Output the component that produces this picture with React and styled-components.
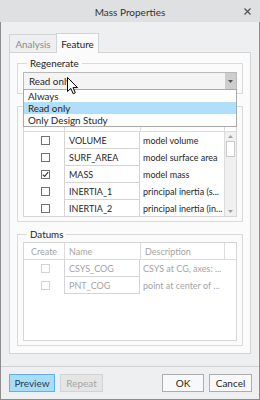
import React from 'react';
import styled, { createGlobalStyle } from 'styled-components';

const GlobalStyle = createGlobalStyle`
  html, body { margin: 0; padding: 0; background: #fff; }
  body {
    font-family: Lato, "Noto Sans", sans-serif;
    font-size: 9.4px;
    color: #262626;
  }
  * { box-sizing: border-box; }
`;

const Window = styled.div`
  width: 260px;
  height: 400px;
  display: flex;
  flex-direction: column;
  background: #eeeff0;
`;

const TitleBar = styled.div`
  height: 22px;
  flex: none;
  display: grid;
  grid-template-columns: 1fr auto 1fr;
  align-items: center;
  background: #dfe0e1;
  font-size: 10px;
  color: #333;
`;

const Title = styled.div`
  grid-column: 2;
  padding-top: 1px;
`;

const CloseBtn = styled.div`
  grid-column: 3;
  justify-self: end;
  margin-right: 9px;
  display: flex;
`;

const Frame = styled.div`
  flex: 1;
  display: flex;
  flex-direction: column;
  border: 1px solid #8c8c8c;
  border-top: none;
`;

const Content = styled.div`
  padding: 11px 8px 12px;
`;

const Tabs = styled.div`
  display: flex;
  align-items: flex-end;
  height: 19px;
`;

const Tab = styled.div`
  height: ${p => (p.$active ? 20 : 18)}px;
  width: ${p => p.$w}px;
  display: flex;
  align-items: center;
  justify-content: center;
  border: 1px solid #d3d3d3;
  border-bottom: none;
  ${p => !p.$active && 'border-right: none;'}
  background: ${p => (p.$active ? '#fbfbfb' : '#eeeff0')};
  color: ${p => (p.$active ? '#222' : '#8a8a8a')};
  font-size: 9.8px;
  margin-bottom: ${p => (p.$active ? -1 : 0)}px;
  position: relative;
  z-index: ${p => (p.$active ? 1 : 0)};
`;

const Panel = styled.div`
  height: 302px;
  display: flex;
  flex-direction: column;
  background: #fbfbfb;
  border: 1px solid #d3d3d3;
  padding: 3px 7px 7px;
`;

const Group = styled.fieldset`
  margin: ${p => (p.$first ? 0 : 5)}px 0 0;
  padding: ${p => p.$pt}px 5px ${p => p.$pb}px;
  border: 1px solid #dadada;
  min-width: 0;
`;

const Legend = styled.legend`
  margin-left: 4px;
  padding: 0 3px;
  height: 14px;
  line-height: 14px;
  font-size: 9.8px;
  color: #222;
`;

const Dropdown = styled.div`
  position: relative;
  height: 18px;
  display: flex;
  align-items: stretch;
  border: 1px solid #b9b9b9;
  background: #f4f4f4;
  font-size: 9.8px;
`;

const DropText = styled.div`
  flex: 1;
  display: flex;
  align-items: center;
  padding-left: 5px;
`;

const DropButton = styled.div`
  width: 11px;
  display: flex;
  align-items: center;
  justify-content: center;
  background: #cdcdcd;
`;

const DropList = styled.div`
  position: absolute;
  top: 16px;
  left: -1px;
  right: -1px;
  background: #fff;
  border: 1px solid #a9a9a9;
  z-index: 5;
`;

const DropItem = styled.div`
  height: 12px;
  line-height: 12px;
  padding-left: 4px;
  background: ${p => (p.$selected ? '#b1def8' : 'transparent')};
`;

const Cursor = styled.svg`
  position: absolute;
  left: 43px;
  top: 4px;
  z-index: 6;
`;

const Table = styled.div`
  height: ${p => p.$h}px;
  display: flex;
  flex-direction: column;
  border: 1px solid #d6d6d6;
  background: #fff;
  font-size: 9px;
`;

const HeaderRow = styled.div`
  height: 17px;
  flex: none;
  display: grid;
  grid-template-columns: 40px 76px 84px 12px;
  border-bottom: 1px solid #dcdcdc;
  color: ${p => (p.$disabled ? '#a4a4a4' : '#555')};
`;

const HeaderCell = styled.div`
  display: flex;
  align-items: center;
  justify-content: ${p => (p.$center ? 'center' : 'flex-start')};
  padding-left: ${p => (p.$center ? 0 : 4)}px;
  border-left: ${p => (p.$first ? 'none' : '1px solid #dcdcdc')};
`;

const TableBody = styled.div`
  flex: 1;
  display: flex;
  min-height: 0;
`;

const Rows = styled.div`
  width: 200px;
  display: flex;
  flex-direction: column;
`;

const Row = styled.div`
  height: 17px;
  flex: none;
  display: grid;
  grid-template-columns: 40px 76px 84px;
  color: ${p => (p.$disabled ? '#a4a4a4' : '#262626')};
`;

const CheckCell = styled.div`
  display: flex;
  align-items: center;
  justify-content: center;
  padding-left: 2px;
`;

const Box = styled.div`
  width: 9px;
  height: 9px;
  display: flex;
  align-items: center;
  justify-content: center;
  border: 1px solid ${p => (p.$disabled ? '#d2d2d2' : '#707070')};
  background: #fff;
`;

const NameCell = styled.div`
  display: flex;
  align-items: center;
  padding-left: 4px;
  border-left: 1px solid #d4d4d4;
  border-right: 1px solid #d4d4d4;
  border-bottom: 1px solid #d4d4d4;
  white-space: nowrap;
  overflow: hidden;
`;

const DescCell = styled.div`
  display: flex;
  align-items: center;
  padding-left: 3px;
  white-space: nowrap;
  overflow: hidden;
`;

const ScrollBar = styled.div`
  width: 12px;
  display: flex;
  flex-direction: column;
  align-items: center;
  border-left: 1px solid #dcdcdc;
  background: #f0f0f0;
`;

const ScrollArrow = styled.div`
  height: 9px;
  display: flex;
  align-items: center;
  justify-content: center;
`;

const Thumb = styled.div`
  width: 9px;
  height: 16px;
  background: #fff;
  border: 1px solid #cacaca;
`;

const Track = styled.div`
  flex: 1;
`;

const Footer = styled.div`
  flex: 1;
  display: flex;
  align-items: flex-start;
  gap: 5px;
  border-top: 1px solid #d2d2d2;
  padding: 7px 7px 0 8px;
`;

const Spacer = styled.div`
  flex: 1;
`;

const variants = {
  primary: 'background: #a9dcf7; border-color: #5cb2e6; color: #1f3f55;',
  disabled: 'background: #e5e5e5; border-color: #d3d3d3; color: #a6a6a6;',
  normal: 'background: #f8f8f8; border-color: #adadad; color: #262626;',
};

const Button = styled.button`
  width: ${p => p.$w}px;
  height: 18px;
  padding: 0;
  border: 1px solid;
  font: inherit;
  font-size: 10px;
  ${p => variants[p.$variant || 'normal']}
`;

const CheckMark = () => (
  <svg width="7" height="7" viewBox="0 0 7 7">
    <path d="M0.8 3.6 L2.6 5.4 L6.2 1.2" fill="none" stroke="#333" strokeWidth="1.1" />
  </svg>
);

const Tri = ({ up, color = '#555', w = 5 }) => (
  <svg width={w} height="3" viewBox="0 0 5 3">
    <path d={up ? 'M0 3 L2.5 0 L5 3 Z' : 'M0 0 L5 0 L2.5 3 Z'} fill={color} />
  </svg>
);

const params = [
  { name: 'VOLUME', desc: 'model volume' },
  { name: 'SURF_AREA', desc: 'model surface area' },
  { name: 'MASS', desc: 'model mass', checked: true },
  { name: 'INERTIA_1', desc: 'principal inertia (s...' },
  { name: 'INERTIA_2', desc: 'principal inertia (in...' },
];

const datums = [
  { name: 'CSYS_COG', desc: 'CSYS at CG, axes: ...' },
  { name: 'PNT_COG', desc: 'point at center of ...' },
];

// the Parameters header sits behind the open drop-down list, so it has no labels
const Header = ({ disabled, labels }) => (
  <HeaderRow $disabled={disabled}>
    <HeaderCell $first $center>{labels && 'Create'}</HeaderCell>
    <HeaderCell>{labels && 'Name'}</HeaderCell>
    <HeaderCell>{labels && 'Description'}</HeaderCell>
    <HeaderCell />
  </HeaderRow>
);

export default function App() {
  return (
    <>
      <GlobalStyle />
      <Window>
        <TitleBar>
          <Title>Mass Properties</Title>
          <CloseBtn>
            <svg width="7" height="7" viewBox="0 0 7 7">
              <path d="M0.5 0.5 L6.5 6.5 M6.5 0.5 L0.5 6.5" stroke="#555" strokeWidth="1.3" />
            </svg>
          </CloseBtn>
        </TitleBar>
        <Frame>
          <Content>
            <Tabs>
              <Tab $w={47}>Analysis</Tab>
              <Tab $w={43} $active>Feature</Tab>
            </Tabs>
            <Panel>
              <Group $first $pt={2} $pb={3}>
                <Legend>Regenerate</Legend>
                <Dropdown>
                  <DropText>Read only</DropText>
                  <DropButton><Tri /></DropButton>
                  <DropList>
                    <DropItem>Always</DropItem>
                    <DropItem $selected>Read only</DropItem>
                    <DropItem>Only Design Study</DropItem>
                  </DropList>
                  <Cursor width="12" height="18" viewBox="0 0 12 18">
                    <path
                      d="M0.5 0.5 L0.5 14.5 L3.8 11.4 L6.2 16.8 L8.4 15.8 L6 10.6 L10.5 10.6 Z"
                      fill="#fff"
                      stroke="#000"
                      strokeWidth="1"
                    />
                  </Cursor>
                </Dropdown>
              </Group>

              <Group $pt={1} $pb={4}>
                <Legend>&nbsp;</Legend>
                <Table $h={103}>
                  <Header />
                  <TableBody>
                    <Rows>
                      {params.map(p => (
                        <Row key={p.name}>
                          <CheckCell>
                            <Box>{p.checked && <CheckMark />}</Box>
                          </CheckCell>
                          <NameCell>{p.name}</NameCell>
                          <DescCell>{p.desc}</DescCell>
                        </Row>
                      ))}
                    </Rows>
                    <ScrollBar>
                      <ScrollArrow><Tri up color="#a0a0a0" /></ScrollArrow>
                      <Thumb />
                      <Track />
                      <ScrollArrow><Tri color="#a0a0a0" /></ScrollArrow>
                    </ScrollBar>
                  </TableBody>
                </Table>
              </Group>

              <Group $pt={1} $pb={4}>
                <Legend>Datums</Legend>
                <Table $h={99}>
                  <Header disabled labels />
                  <TableBody>
                    <Rows>
                      {datums.map(d => (
                        <Row key={d.name} $disabled>
                          <CheckCell>
                            <Box $disabled />
                          </CheckCell>
                          <NameCell>{d.name}</NameCell>
                          <DescCell>{d.desc}</DescCell>
                        </Row>
                      ))}
                    </Rows>
                  </TableBody>
                </Table>
              </Group>
            </Panel>
          </Content>
          <Footer>
            <Button $w={46} $variant="primary">Preview</Button>
            <Button $w={43} $variant="disabled">Repeat</Button>
            <Spacer />
            <Button $w={42}>OK</Button>
            <Button $w={43}>Cancel</Button>
          </Footer>
        </Frame>
      </Window>
    </>
  );
}
